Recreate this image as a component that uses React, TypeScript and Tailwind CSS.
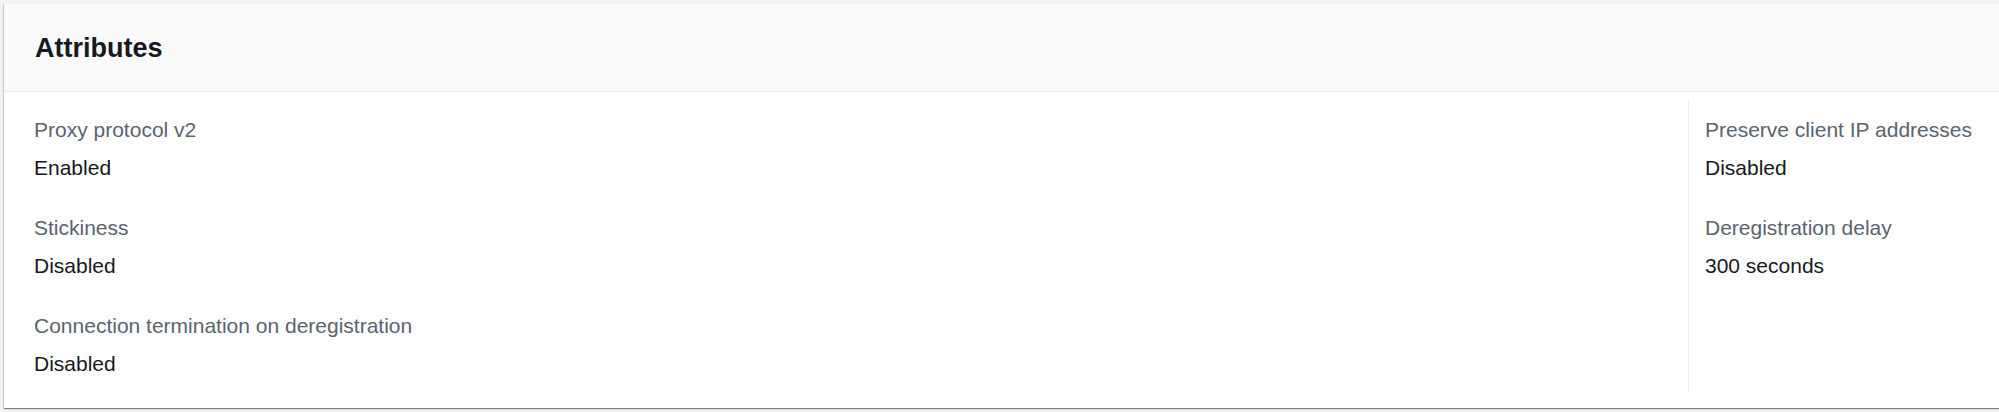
const leftItems = [
  { label: "Proxy protocol v2", value: "Enabled" },
  { label: "Stickiness", value: "Disabled" },
  { label: "Connection termination on deregistration", value: "Disabled" },
];

const rightItems = [
  { label: "Preserve client IP addresses", value: "Disabled" },
  { label: "Deregistration delay", value: "300 seconds" },
];

function Field({ label, value }: { label: string; value: string }) {
  return (
    <div className="flex flex-col gap-[10px]">
      <div className="text-[21px] leading-[28px] text-[#5a6370]">{label}</div>
      <div className="text-[21px] leading-[28px] text-[#16191f]">{value}</div>
    </div>
  );
}

export default function App() {
  return (
    <div
      className="h-[412px] w-full overflow-hidden bg-[#f2f3f3] pl-[4px] pt-[4px]"
      style={{ fontFamily: '"Liberation Sans", Arial, sans-serif' }}
    >
      <div className="w-[2020px] bg-white shadow-[0_1px_1px_0_rgba(0,28,36,0.3),1px_1px_1px_0_rgba(0,28,36,0.15),-1px_1px_1px_0_rgba(0,28,36,0.15)]">
        <div className="flex h-[88px] items-center border-b border-[#eaeded] bg-[#fafafa] pl-[31px]">
          <h2 className="text-[27px] font-bold leading-[34px] text-[#16191f]">Attributes</h2>
        </div>
        <div className="flex pt-[7px] pb-[16px]">
          <div className="flex w-[1684px] flex-col gap-[32px] pt-[17px] pb-[14px] pl-[30px]">
            {leftItems.map((item) => (
              <Field key={item.label} label={item.label} value={item.value} />
            ))}
          </div>
          <div className="flex flex-1 flex-col gap-[32px] border-l border-[#eaeded] pt-[17px] pl-[16px]">
            {rightItems.map((item) => (
              <Field key={item.label} label={item.label} value={item.value} />
            ))}
          </div>
        </div>
      </div>
    </div>
  );
}
